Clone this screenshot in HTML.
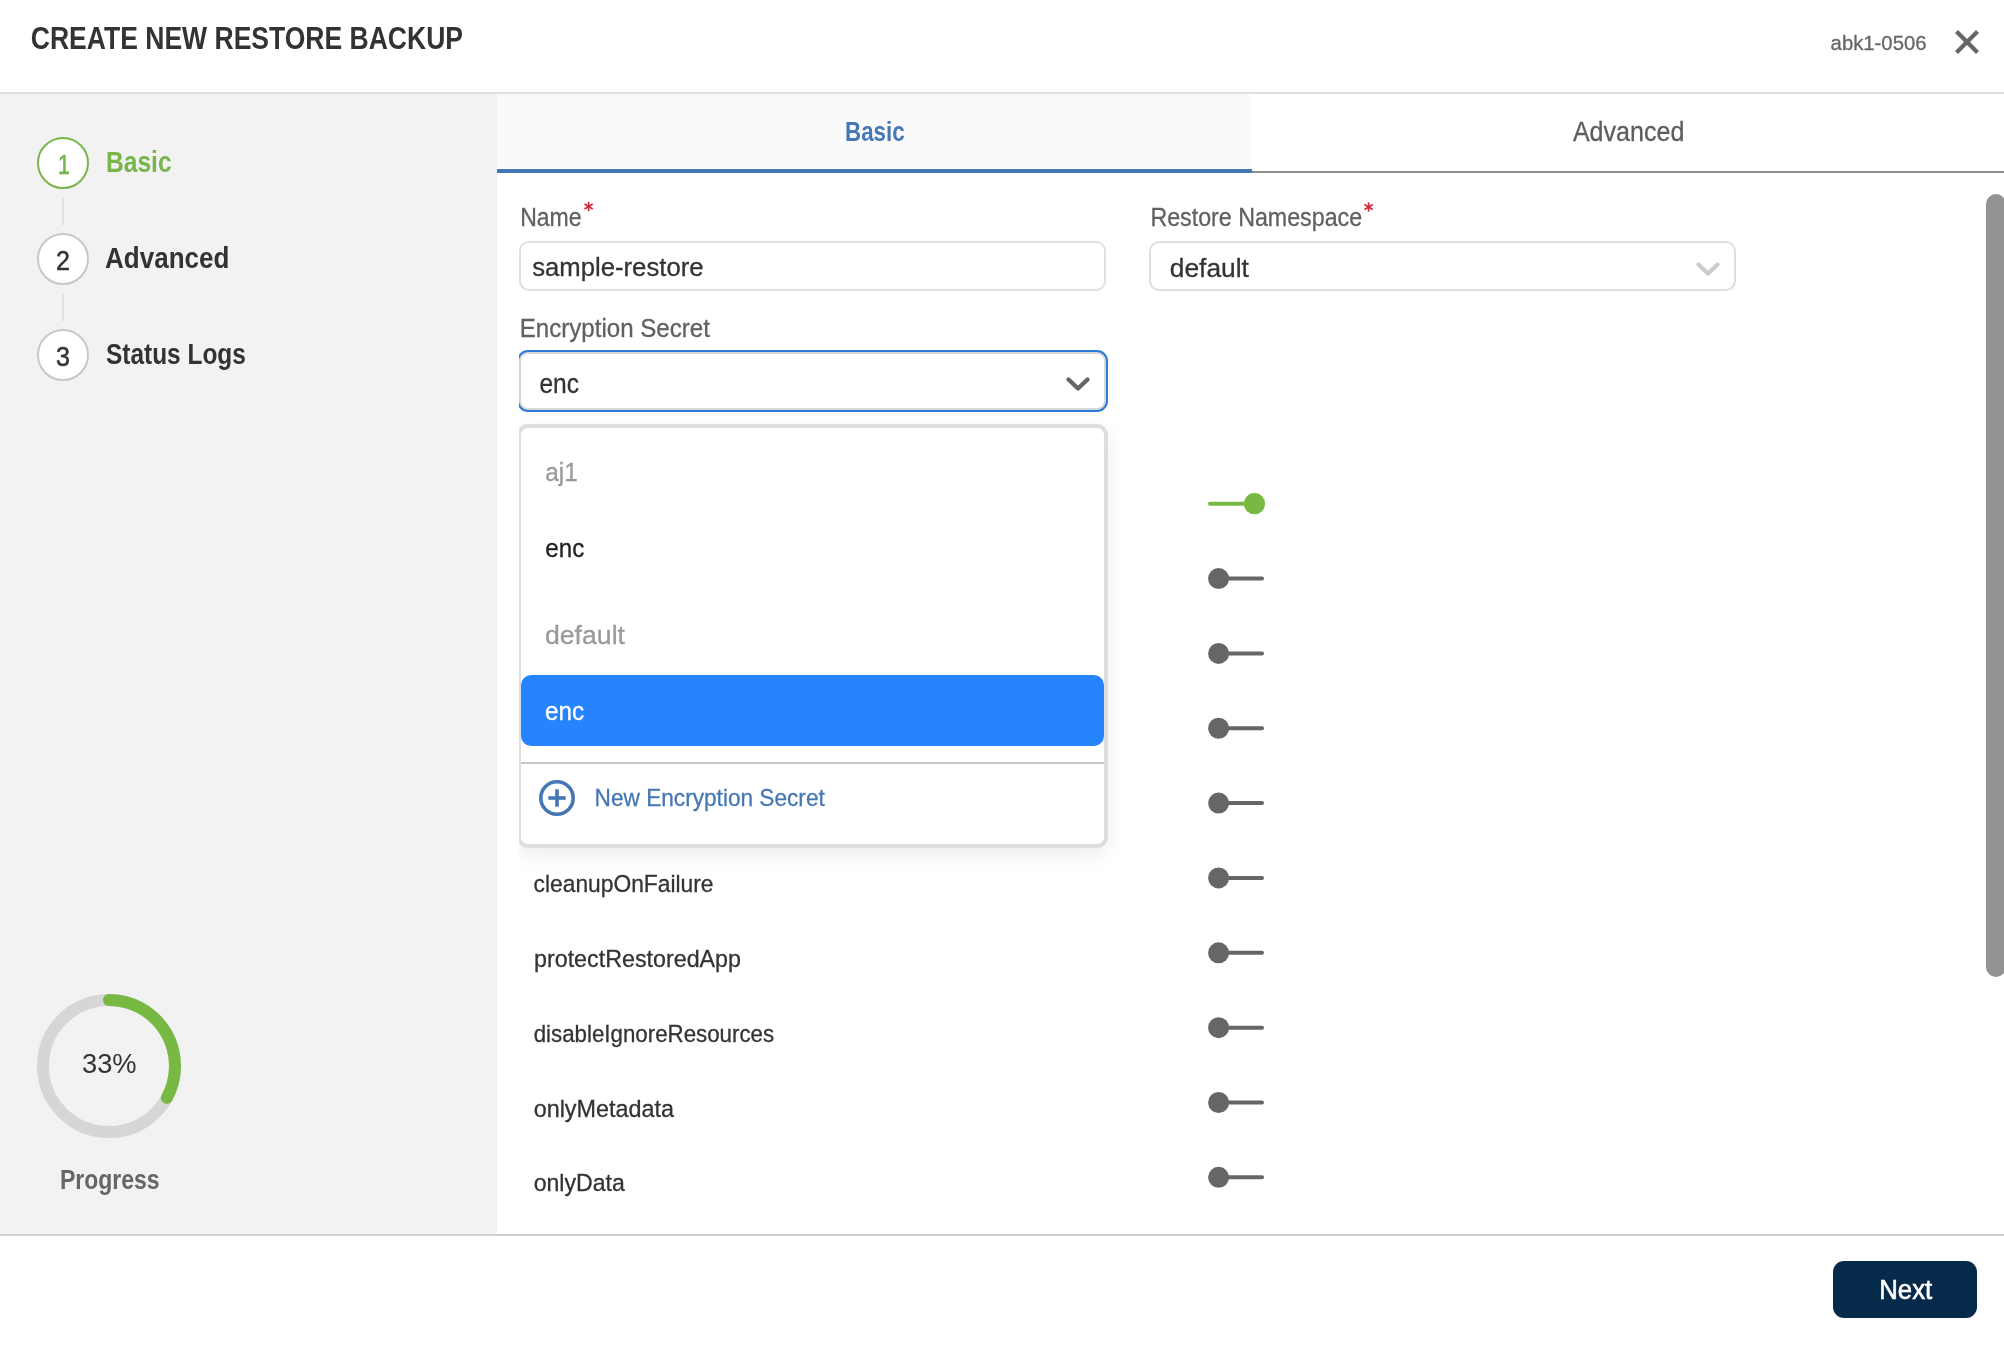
<!DOCTYPE html>
<html><head><meta charset="utf-8"><title>Create New Restore Backup</title>
<style>
html,body{margin:0;padding:0;width:2004px;height:1350px;overflow:hidden;background:#ffffff;font-family:"Liberation Sans",sans-serif;}
.a{position:absolute;box-sizing:border-box;}
svg.ov{position:absolute;will-change:transform;left:0;top:0;width:2004px;height:1350px;font-family:"Liberation Sans",sans-serif;}
</style></head><body>
<!-- header -->
<div class="a" style="left:0;top:92px;width:2004px;height:2px;background:#dcdfe3"></div>
<!-- sidebar -->
<div class="a" style="left:0;top:94px;width:497px;height:1140px;background:#f2f2f2"></div>
<!-- step circles -->
<div class="a" style="left:37px;top:137px;width:52px;height:52px;border:2px solid #78b64b;border-radius:50%;background:#fff"></div>
<div class="a" style="left:62px;top:197px;width:2px;height:28px;background:#e0e0e0"></div>
<div class="a" style="left:37px;top:233px;width:52px;height:52px;border:2px solid #c8c8c8;border-radius:50%;background:#fff"></div>
<div class="a" style="left:62px;top:293px;width:2px;height:28px;background:#e0e0e0"></div>
<div class="a" style="left:37px;top:329px;width:52px;height:52px;border:2px solid #c8c8c8;border-radius:50%;background:#fff"></div>
<!-- tabs -->
<div class="a" style="left:497px;top:94px;width:755px;height:77px;background:#fafafa"></div>
<div class="a" style="left:497px;top:171px;width:1507px;height:2px;background:#8f8f8f"></div>
<div class="a" style="left:497px;top:169px;width:755px;height:4px;background:#4577b5"></div>
<!-- name input -->
<div class="a" style="left:519px;top:241px;width:587px;height:50px;border:2px solid #e0e0e0;border-radius:10px;background:#fff"></div>
<!-- namespace select -->
<div class="a" style="left:1149px;top:241px;width:587px;height:50px;border:2px solid #dedede;border-radius:10px;background:#fff"></div>
<!-- encryption select + menu (clipped container) -->
<div class="a" style="left:519px;top:330px;width:700px;height:580px;overflow:hidden">
<div class="a" style="left:0;top:22px;width:587px;height:58px;border:2px solid #d8d8d8;border-radius:9px;background:#fff;box-shadow:0 0 0 2px #2c7bdc"></div>
<div class="a" style="left:-2px;top:94px;width:591px;height:424px;border:4px solid #dedede;border-radius:11px;background:#fff;box-shadow:0 7px 20px rgba(0,0,0,0.075)"></div>
<div class="a" style="left:2px;top:345px;width:583px;height:71px;background:#2684ff;border-radius:10px"></div>
<div class="a" style="left:2px;top:432px;width:583px;height:2px;background:#c9c9c9"></div>
</div>
<!-- scrollbar -->
<div class="a" style="left:1986px;top:194px;width:20px;height:783px;background:#949394;border-radius:10px"></div>
<!-- footer -->
<div class="a" style="left:0;top:1234px;width:2004px;height:2px;background:#cfcfcf"></div>
<div class="a" style="left:1833px;top:1261px;width:144px;height:57px;background:#052a4a;border-radius:11px"></div>

<svg class="ov" width="2004" height="1350" viewBox="0 0 2004 1350">
<!-- close X -->
<g stroke="#666" stroke-width="4.2" stroke-linecap="butt">
<line x1="1956.5" y1="31.5" x2="1977.5" y2="52.5"/>
<line x1="1977.5" y1="31.5" x2="1956.5" y2="52.5"/>
</g>
<!-- chevrons -->
<polyline points="1068.5,379.5 1078,388.5 1087.5,379.5" fill="none" stroke="#666" stroke-width="4.4" stroke-linecap="round" stroke-linejoin="round"/>
<polyline points="1698.5,264.5 1708,273.5 1717.5,264.5" fill="none" stroke="#cccccc" stroke-width="4.4" stroke-linecap="round" stroke-linejoin="round"/>
<!-- plus circle icon -->
<circle cx="557" cy="798" r="16.2" fill="none" stroke="#4577b5" stroke-width="3.6"/>
<line x1="548.3" y1="798" x2="565.7" y2="798" stroke="#4577b5" stroke-width="3.6"/>
<line x1="557" y1="789.3" x2="557" y2="806.7" stroke="#4577b5" stroke-width="3.6"/>
<!-- progress ring -->
<circle cx="109" cy="1066" r="66" fill="none" stroke="#d6d6d6" stroke-width="12"/>
<path d="M109.00,1000.00 A66,66 0 0 1 166.84,1097.80" fill="none" stroke="#78b943" stroke-width="12" stroke-linecap="round"/>
<!-- toggles -->
<line x1="1210" y1="503.70" x2="1250" y2="503.70" stroke="#78b943" stroke-width="4" stroke-linecap="round"/>
<circle cx="1254.5" cy="503.70" r="10.6" fill="#78b943"/>
<line x1="1222" y1="578.55" x2="1262" y2="578.55" stroke="#666666" stroke-width="4" stroke-linecap="round"/>
<circle cx="1218.6" cy="578.55" r="10.5" fill="#666666"/>
<line x1="1222" y1="653.40" x2="1262" y2="653.40" stroke="#666666" stroke-width="4" stroke-linecap="round"/>
<circle cx="1218.6" cy="653.40" r="10.5" fill="#666666"/>
<line x1="1222" y1="728.25" x2="1262" y2="728.25" stroke="#666666" stroke-width="4" stroke-linecap="round"/>
<circle cx="1218.6" cy="728.25" r="10.5" fill="#666666"/>
<line x1="1222" y1="803.10" x2="1262" y2="803.10" stroke="#666666" stroke-width="4" stroke-linecap="round"/>
<circle cx="1218.6" cy="803.10" r="10.5" fill="#666666"/>
<line x1="1222" y1="877.95" x2="1262" y2="877.95" stroke="#666666" stroke-width="4" stroke-linecap="round"/>
<circle cx="1218.6" cy="877.95" r="10.5" fill="#666666"/>
<line x1="1222" y1="952.80" x2="1262" y2="952.80" stroke="#666666" stroke-width="4" stroke-linecap="round"/>
<circle cx="1218.6" cy="952.80" r="10.5" fill="#666666"/>
<line x1="1222" y1="1027.65" x2="1262" y2="1027.65" stroke="#666666" stroke-width="4" stroke-linecap="round"/>
<circle cx="1218.6" cy="1027.65" r="10.5" fill="#666666"/>
<line x1="1222" y1="1102.50" x2="1262" y2="1102.50" stroke="#666666" stroke-width="4" stroke-linecap="round"/>
<circle cx="1218.6" cy="1102.50" r="10.5" fill="#666666"/>
<line x1="1222" y1="1177.35" x2="1262" y2="1177.35" stroke="#666666" stroke-width="4" stroke-linecap="round"/>
<circle cx="1218.6" cy="1177.35" r="10.5" fill="#666666"/>
<!-- asterisks -->
<g stroke="#d0293b" stroke-width="1.7" stroke-linecap="butt">
<line x1="588.6" y1="201.8" x2="588.6" y2="211.2"/>
<line x1="584.5" y1="204.1" x2="592.7" y2="208.9"/>
<line x1="584.5" y1="208.9" x2="592.7" y2="204.1"/>
<line x1="1368.6" y1="202.3" x2="1368.6" y2="211.7"/>
<line x1="1364.5" y1="204.6" x2="1372.7" y2="209.4"/>
<line x1="1364.5" y1="209.4" x2="1372.7" y2="204.6"/>
</g>
<text x="30.80" y="49.10" font-size="31" fill="#333333" font-weight="bold" textLength="432.22" lengthAdjust="spacingAndGlyphs">CREATE NEW RESTORE BACKUP</text>
<text x="1830.60" y="49.80" font-size="20.5" fill="#666666" stroke="#666666" stroke-width="0.3" textLength="95.89" lengthAdjust="spacingAndGlyphs">abk1-0506</text>
<text x="58.00" y="173.80" font-size="28" fill="#78b64b" stroke="#78b64b" stroke-width="0.7" textLength="11.88" lengthAdjust="spacingAndGlyphs">1</text>
<text x="56.00" y="269.70" font-size="28" fill="#333333" stroke="#333333" stroke-width="0.5" textLength="13.97" lengthAdjust="spacingAndGlyphs">2</text>
<text x="56.00" y="365.50" font-size="28" fill="#333333" stroke="#333333" stroke-width="0.5" textLength="13.97" lengthAdjust="spacingAndGlyphs">3</text>
<text x="106.00" y="172.00" font-size="29.5" fill="#78b64b" font-weight="bold" textLength="65.62" lengthAdjust="spacingAndGlyphs">Basic</text>
<text x="105.00" y="267.80" font-size="29.5" fill="#333333" font-weight="bold" textLength="124.39" lengthAdjust="spacingAndGlyphs">Advanced</text>
<text x="106.00" y="363.70" font-size="29.5" fill="#333333" font-weight="bold" textLength="139.82" lengthAdjust="spacingAndGlyphs">Status Logs</text>
<text x="82.00" y="1072.80" font-size="28" fill="#333333" textLength="54.64" lengthAdjust="spacingAndGlyphs">33%</text>
<text x="59.90" y="1188.70" font-size="27" fill="#666666" font-weight="bold" textLength="99.66" lengthAdjust="spacingAndGlyphs">Progress</text>
<text x="845.10" y="140.90" font-size="27.5" fill="#4577b5" font-weight="bold" textLength="59.48" lengthAdjust="spacingAndGlyphs">Basic</text>
<text x="1572.90" y="141.30" font-size="27.4" fill="#5d5d5d" stroke="#5d5d5d" stroke-width="0.3" textLength="111.47" lengthAdjust="spacingAndGlyphs">Advanced</text>
<text x="520.20" y="225.90" font-size="26" fill="#616161" stroke="#616161" stroke-width="0.3" textLength="61.36" lengthAdjust="spacingAndGlyphs">Name</text>
<text x="532.20" y="275.90" font-size="26.2" fill="#333333" stroke="#333333" stroke-width="0.3" textLength="171.33" lengthAdjust="spacingAndGlyphs">sample-restore</text>
<text x="1150.40" y="226.10" font-size="26" fill="#616161" stroke="#616161" stroke-width="0.3" textLength="211.69" lengthAdjust="spacingAndGlyphs">Restore Namespace</text>
<text x="1169.80" y="277.40" font-size="26" fill="#333333" stroke="#333333" stroke-width="0.3" textLength="79.16" lengthAdjust="spacingAndGlyphs">default</text>
<text x="519.70" y="337.10" font-size="26" fill="#616161" stroke="#616161" stroke-width="0.3" textLength="190.20" lengthAdjust="spacingAndGlyphs">Encryption Secret</text>
<text x="539.40" y="392.80" font-size="27" fill="#333333" stroke="#333333" stroke-width="0.3" textLength="39.63" lengthAdjust="spacingAndGlyphs">enc</text>
<text x="545.30" y="480.80" font-size="26.5" fill="#999999" stroke="#999999" stroke-width="0.3" textLength="32.57" lengthAdjust="spacingAndGlyphs">aj1</text>
<text x="545.30" y="556.60" font-size="26.5" fill="#222222" stroke="#222222" stroke-width="0.3" textLength="38.92" lengthAdjust="spacingAndGlyphs">enc</text>
<text x="545.00" y="643.90" font-size="26.5" fill="#999999" stroke="#999999" stroke-width="0.3" textLength="79.96" lengthAdjust="spacingAndGlyphs">default</text>
<text x="545.00" y="720.00" font-size="26.5" fill="#ffffff" stroke="#ffffff" stroke-width="0.3" textLength="39.02" lengthAdjust="spacingAndGlyphs">enc</text>
<text x="594.60" y="805.80" font-size="24.5" fill="#4577b5" stroke="#4577b5" stroke-width="0.3" textLength="230.18" lengthAdjust="spacingAndGlyphs">New Encryption Secret</text>
<text x="533.60" y="891.90" font-size="24.5" fill="#333333" stroke="#333333" stroke-width="0.3" textLength="179.89" lengthAdjust="spacingAndGlyphs">cleanupOnFailure</text>
<text x="534.00" y="966.90" font-size="24.5" fill="#333333" stroke="#333333" stroke-width="0.3" textLength="207.00" lengthAdjust="spacingAndGlyphs">protectRestoredApp</text>
<text x="533.70" y="1042.10" font-size="24.5" fill="#333333" stroke="#333333" stroke-width="0.3" textLength="240.41" lengthAdjust="spacingAndGlyphs">disableIgnoreResources</text>
<text x="533.70" y="1116.60" font-size="24.5" fill="#333333" stroke="#333333" stroke-width="0.3" textLength="140.30" lengthAdjust="spacingAndGlyphs">onlyMetadata</text>
<text x="533.70" y="1191.00" font-size="24.5" fill="#333333" stroke="#333333" stroke-width="0.3" textLength="91.10" lengthAdjust="spacingAndGlyphs">onlyData</text>
<text x="1879.20" y="1298.90" font-size="27.5" fill="#ffffff" stroke="#ffffff" stroke-width="0.6" textLength="53.04" lengthAdjust="spacingAndGlyphs">Next</text>
</svg>
</body></html>
